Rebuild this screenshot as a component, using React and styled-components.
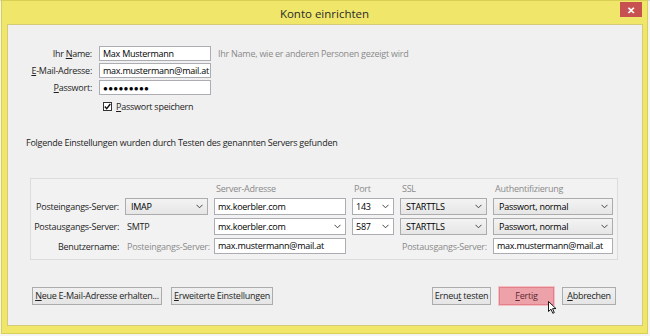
import React from 'react';
import styled, { createGlobalStyle } from 'styled-components';

const GlobalStyle = createGlobalStyle`
  html, body {
    margin: 0;
    padding: 0;
    background: #f4f4f4;
  }
  body {
    font-family: "Open Sans", "Noto Sans", sans-serif;
    font-size: 9px;
    letter-spacing: -0.25px;
    color: #1e1e1e;
  }
`;

const Desktop = styled.div`
  position: relative;
  width: 650px;
  height: 336px;
  overflow: hidden;
  padding: 1px 3px 3px 2px;
  box-sizing: border-box;
  background: linear-gradient(#d8d8d8 0, #d8d8d8 1px, #f4f4f4 1px);
`;

const Window = styled.div`
  display: flex;
  flex-direction: column;
  height: 332px;
  background: #efe66a;
  box-shadow: 0 0 0 1px #d9cf55;
`;

const TitleBar = styled.div`
  display: grid;
  grid-template-columns: 1fr auto 1fr;
  height: 23px;
`;

const Title = styled.div`
  grid-column: 2;
  align-self: center;
  font-size: 11.5px;
  letter-spacing: 0;
  color: #2b2b2b;
  padding-top: 1px;
`;

const CloseButton = styled.div`
  grid-column: 3;
  justify-self: end;
  align-self: start;
  display: flex;
  align-items: center;
  justify-content: center;
  width: 22px;
  height: 15px;
  margin: 1px 5px 0 0;
  background: #c75050;
  color: #fff;
  font-size: 10px;
  font-weight: 700;
  line-height: 1;
`;

const Content = styled.div`
  position: relative;
  flex: 1;
  display: flex;
  flex-direction: column;
  margin: 0 4px 7px 5px;
  background: #f0f0f0;
  border: 1px solid #d3cb78;
`;

const FormGrid = styled.div`
  display: grid;
  grid-template-columns: 85px 112px auto;
  grid-auto-rows: 15px;
  column-gap: 7px;
  row-gap: 2px;
  margin-top: 21px;
  margin-left: -1px;
  align-items: center;
`;

const Label = styled.label`
  white-space: nowrap;
  color: ${p => (p.$muted ? '#8a8a8a' : '#1e1e1e')};
  justify-self: end;
`;

const Key = styled.span`
  text-decoration: underline;
  text-underline-offset: 1px;
`;

const Field = styled.div`
  box-sizing: border-box;
  height: ${p => p.$h || 15}px;
  line-height: ${p => (p.$h || 15) - 2}px;
  padding: 0 3px;
  background: #fff;
  border: 1px solid #abadb3;
  color: #000;
  white-space: nowrap;
  overflow: hidden;
  font-size: ${p => (p.$dots ? '8px' : '9px')};
  letter-spacing: ${p => (p.$dots ? '0.3px' : '-0.25px')};
`;

const Hint = styled.span`
  color: #8a8a8a;
  white-space: nowrap;
`;

const CheckRow = styled.div`
  display: flex;
  align-items: center;
  gap: 4px;
  margin: 5px 0 0 95px;
`;

const Box = styled.span`
  display: flex;
  align-items: center;
  justify-content: center;
  width: 9px;
  height: 9px;
  box-sizing: border-box;
  background: #fff;
  border: 1px solid #333;
`;

const Note = styled.div`
  margin: 23px 0 0 18px;
  color: #1e1e1e;
`;

const ServerBox = styled.div`
  display: grid;
  grid-template-columns: 88px 83px 132px 42px 87px 120px;
  grid-template-rows: 15px 17px 17px 16px;
  column-gap: 6px;
  row-gap: 3px;
  align-items: center;
  width: 588px;
  box-sizing: border-box;
  margin: 29px 0 0 22px;
  padding: 1px 4px 5px 0;
  background: #f2f2f2;
  border: 1px solid #dcdcdc;
`;

const ColHead = styled.div`
  color: #8a8a8a;
  align-self: end;
  padding-left: 2px;
  white-space: nowrap;
`;

const Select = styled.div`
  display: flex;
  align-items: center;
  justify-content: space-between;
  box-sizing: border-box;
  height: ${p => p.$h || 17}px;
  padding: 0 4px 0 ${p => (p.$edit ? 3 : 5)}px;
  background: ${p => (p.$edit ? '#fff' : 'linear-gradient(#f3f3f3, #e6e6e6)')};
  border: 1px solid ${p => (p.$edit ? '#abadb3' : '#acacac')};
  color: #000;
  white-space: nowrap;
`;

const Plain = styled.div`
  padding-left: 2px;
  color: ${p => (p.$muted ? '#8a8a8a' : '#1e1e1e')};
  white-space: nowrap;
`;

const Footer = styled.div`
  display: flex;
  align-items: center;
  justify-content: space-between;
  margin-top: auto;
  padding: 0 26px 20px 24px;
`;

const ButtonGroup = styled.div`
  display: flex;
  gap: ${p => p.$gap || 8}px;
`;

const Button = styled.div`
  box-sizing: border-box;
  width: ${p => p.$w}px;
  height: 18px;
  line-height: 16px;
  text-align: center;
  background: ${p => (p.$primary ? '#eda2aa' : 'linear-gradient(#f0f0f0, #e5e5e5)')};
  border: 1px solid ${p => (p.$primary ? '#e27f8a' : '#acacac')};
  box-shadow: ${p => (p.$primary ? '0 0 0 1px #f3c0c5' : 'none')};
  color: ${p => (p.$primary ? '#5a2a2e' : '#1e1e1e')};
  white-space: nowrap;
`;

const Cursor = styled.svg`
  position: absolute;
  left: 540px;
  top: 276px;
`;

const Chevron = () => (
  <svg width="7" height="5" viewBox="0 0 7 5">
    <polyline points="0.5,0.8 3.5,3.8 6.5,0.8" fill="none" stroke="#444" strokeWidth="1" />
  </svg>
);

const Check = () => (
  <svg width="7" height="7" viewBox="0 0 7 7">
    <polyline points="0.8,3.5 2.7,5.6 6.3,1" fill="none" stroke="#111" strokeWidth="1.4" />
  </svg>
);

const Combo = ({ children, edit, h }) => (
  <Select $edit={edit} $h={h}>
    <span>{children}</span>
    <Chevron />
  </Select>
);

export default function App() {
  return (
    <>
      <GlobalStyle />
      <Desktop>
        <Window>
          <TitleBar>
            <Title>Konto einrichten</Title>
            <CloseButton>✕</CloseButton>
          </TitleBar>
          <Content>
            <FormGrid>
              <Label>Ihr <Key>N</Key>ame:</Label>
              <Field>Max Mustermann</Field>
              <Hint>Ihr Name, wie er anderen Personen gezeigt wird</Hint>
              <Label><Key>E</Key>-Mail-Adresse:</Label>
              <Field>max.mustermann@mail.at</Field>
              <span />
              <Label><Key>P</Key>asswort:</Label>
              <Field $dots>●●●●●●●●●</Field>
              <span />
            </FormGrid>
            <CheckRow>
              <Box><Check /></Box>
              <span><Key>P</Key>asswort speichern</span>
            </CheckRow>

            <Note>Folgende Einstellungen wurden durch Testen des genannten Servers gefunden</Note>

            <ServerBox>
              <span />
              <span />
              <ColHead>Server-Adresse</ColHead>
              <ColHead>Port</ColHead>
              <ColHead>SSL</ColHead>
              <ColHead>Authentifizierung</ColHead>

              <Label>Posteingangs-Server:</Label>
              <Combo>IMAP</Combo>
              <Field $h={17}>mx.koerbler.com</Field>
              <Combo edit>143</Combo>
              <Combo>STARTTLS</Combo>
              <Combo>Passwort, normal</Combo>

              <Label>Postausgangs-Server:</Label>
              <Plain>SMTP</Plain>
              <Combo edit>mx.koerbler.com</Combo>
              <Combo edit>587</Combo>
              <Combo>STARTTLS</Combo>
              <Combo>Passwort, normal</Combo>

              <Label>Benutzername:</Label>
              <Plain $muted>Posteingangs-Server:</Plain>
              <Field $h={16}>max.mustermann@mail.at</Field>
              <span />
              <Plain $muted>Postausgangs-Server:</Plain>
              <Field $h={16}>max.mustermann@mail.at</Field>
            </ServerBox>

            <Footer>
              <ButtonGroup $gap={9}>
                <Button $w={130}><Key>N</Key>eue E-Mail-Adresse erhalten...</Button>
                <Button $w={102}><Key>E</Key>rweiterte Einstellungen</Button>
              </ButtonGroup>
              <ButtonGroup $gap={8}>
                <Button $w={59}>Erneu<Key>t</Key> testen</Button>
                <Button $primary $w={55}><Key>F</Key>ertig</Button>
                <Button $w={54}><Key>A</Key>bbrechen</Button>
              </ButtonGroup>
            </Footer>

            <Cursor width="9" height="13" viewBox="0 0 9 13">
              <path d="M0.5 0.5 L0.5 10.5 L3 8.2 L4.8 12.3 L6.3 11.6 L4.6 7.6 L8 7.6 Z" fill="#fff" stroke="#000" strokeWidth="0.9" />
            </Cursor>
          </Content>
        </Window>
      </Desktop>
    </>
  );
}
